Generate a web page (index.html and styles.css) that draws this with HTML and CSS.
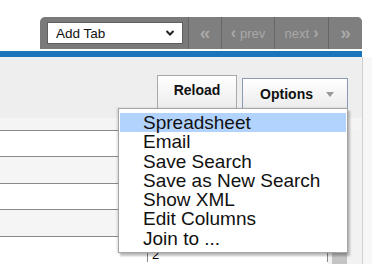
FILE: index.html
```html
<!DOCTYPE html>
<html lang="en">
<head>
    <meta charset="UTF-8">
    <title>Search Results</title>
    <link rel="stylesheet" href="styles.css">
</head>
<body>
    <div class="topbar">
        <div class="toolbar">
            <div class="tab-select">
                <span>Add Tab</span>
                <svg width="10" height="8" viewBox="0 0 10 8"><path d="M1.5 2 L5 5.5 L8.5 2" fill="none" stroke="#222" stroke-width="2"/></svg>
            </div>
            <div class="pager">
                <span class="page-btn first">&laquo;</span>
                <span class="page-btn prev"><b>&lsaquo;</b> prev</span>
                <span class="page-btn next">next <b>&rsaquo;</b></span>
                <span class="page-btn last">&raquo;</span>
            </div>
        </div>
    </div>
    <div class="blue-bar"></div>

    <div class="main">
        <div class="panel">
            <div class="actions">
                <button class="btn reload">Reload</button>
                <button class="btn options">Options <span class="caret"></span></button>
            </div>
            <div class="band"></div>
            <div class="results">
                <div class="rows">
                    <div class="row"><div class="cell c1"></div><div class="cell c2"></div></div>
                    <div class="row alt"><div class="cell c1"></div><div class="cell c2"></div></div>
                    <div class="row"><div class="cell c1"></div><div class="cell c2"></div></div>
                    <div class="row alt"><div class="cell c1"></div><div class="cell c2"></div></div>
                    <div class="row"><div class="cell c1"></div><div class="cell c2">2</div></div>
                </div>
                <div class="scroll"><div class="thumb"></div></div>
            </div>

            <ul class="menu">
                <li class="active">Spreadsheet</li>
                <li>Email</li>
                <li>Save Search</li>
                <li>Save as New Search</li>
                <li>Show XML</li>
                <li>Edit Columns</li>
                <li>Join to ...</li>
            </ul>
        </div>
        <div class="side"></div>
    </div>
</body>
</html>
```

FILE: styles.css
```css
body {
    margin: 0;
    font-family: "Liberation Sans", Arial, sans-serif;
    background: #fff;
    height: 264px;
    overflow: hidden;
}
.topbar {
    display: flex;
    justify-content: flex-end;
    padding: 17px 10px 0 0;
    height: 32px;
}
.toolbar {
    display: flex;
    background: #7a7a7a;
    border-radius: 5px 5px 0 0;
    padding-left: 7px;
    height: 32px;
}
.tab-select {
    display: flex;
    align-items: center;
    justify-content: space-between;
    box-sizing: border-box;
    width: 136px;
    height: 22px;
    margin-top: 5px;
    padding: 0 7px 0 8px;
    background: #fff;
    border: 1px solid #5e5e5e;
    font-size: 13.5px;
    color: #111;
}
.pager {
    display: flex;
    margin-left: 5px;
}
.page-btn {
    display: flex;
    align-items: center;
    justify-content: center;
    box-sizing: border-box;
    height: 32px;
    border-left: 1px solid #666;
    background: #7f7f7f;
    color: #a9a9a9;
    font-size: 13px;
}
.page-btn b {
    font-size: 16px;
}
.page-btn.first {
    width: 33px;
    font-size: 19px;
    font-weight: bold;
}
.page-btn.prev { width: 53px; gap: 4px; }
.page-btn.next { width: 54px; gap: 4px; }
.page-btn.last {
    width: 34px;
    font-size: 19px;
    font-weight: bold;
    border-top-right-radius: 5px;
}
.blue-bar {
    height: 6px;
    margin-top: 2px;
    margin-right: 10px;
    background: #1c74ba;
}
.main {
    display: flex;
    height: 207px;
}
.panel {
    position: relative;
    width: 362px;
    background: #eeeeee;
    border-right: 1px solid #cfcfcf;
}
.side {
    flex: 1;
    background: #f7f7f7;
}
.actions {
    display: flex;
    justify-content: flex-end;
    align-items: flex-end;
    gap: 5px;
    height: 52px;
    padding: 0 14px 9px 0;
}
.btn {
    font-family: "Liberation Sans", Arial, sans-serif;
    font-weight: bold;
    font-size: 14px;
    color: #111;
    background: linear-gradient(#ffffff, #ececec);
    border-radius: 0;
    cursor: pointer;
}
.reload {
    width: 80px;
    height: 34px;
    border: 1px solid #a9a9a9;
    padding: 0 0 4px;
}
.options {
    width: 106px;
    height: 31px;
    border: 1px solid #8a9ab5;
    padding: 0 0 0 4px;
}
.caret {
    display: inline-block;
    margin-left: 9px;
    vertical-align: middle;
    border-left: 4px solid transparent;
    border-right: 4px solid transparent;
    border-top: 5px solid #999;
}
.band {
    height: 12px;
    background: #f4f4f4;
}
.results {
    display: flex;
    background: #fff;
}
.rows {
    width: 328px;
}
.row {
    display: flex;
    box-sizing: border-box;
    height: 26.4px;
    border-top: 1px solid #8a8a8a;
    background: #fff;
}
.row.alt {
    background: #f5f5f5;
}
.cell {
    box-sizing: border-box;
    border-right: 1px solid #8a8a8a;
    font-size: 13px;
    line-height: 11px;
    padding: 12px 0 0 4px;
}
.c1 { width: 148px; }
.c2 { width: 180px; }
.scroll {
    width: 34px;
    background: #f2f2f2;
    padding-left: 4px;
}
.thumb {
    width: 15px;
    height: 140px;
    background: #c4c4c4;
}
.menu {
    position: absolute;
    left: 118px;
    top: 51px;
    width: 230px;
    box-sizing: border-box;
    margin: 0;
    padding: 4px 1px 4px 1px;
    list-style: none;
    background: #fff;
    border: 1px solid #a6a6a6;
    box-shadow: 2px 3px 2px rgba(0, 0, 0, 0.25), -1px 0 2px rgba(0, 0, 0, 0.15);
}
.menu li {
    font-size: 19px;
    line-height: 19.3px;
    padding-left: 23px;
    color: #111;
}
.menu li.active {
    background: #b3d3ff;
}
```
